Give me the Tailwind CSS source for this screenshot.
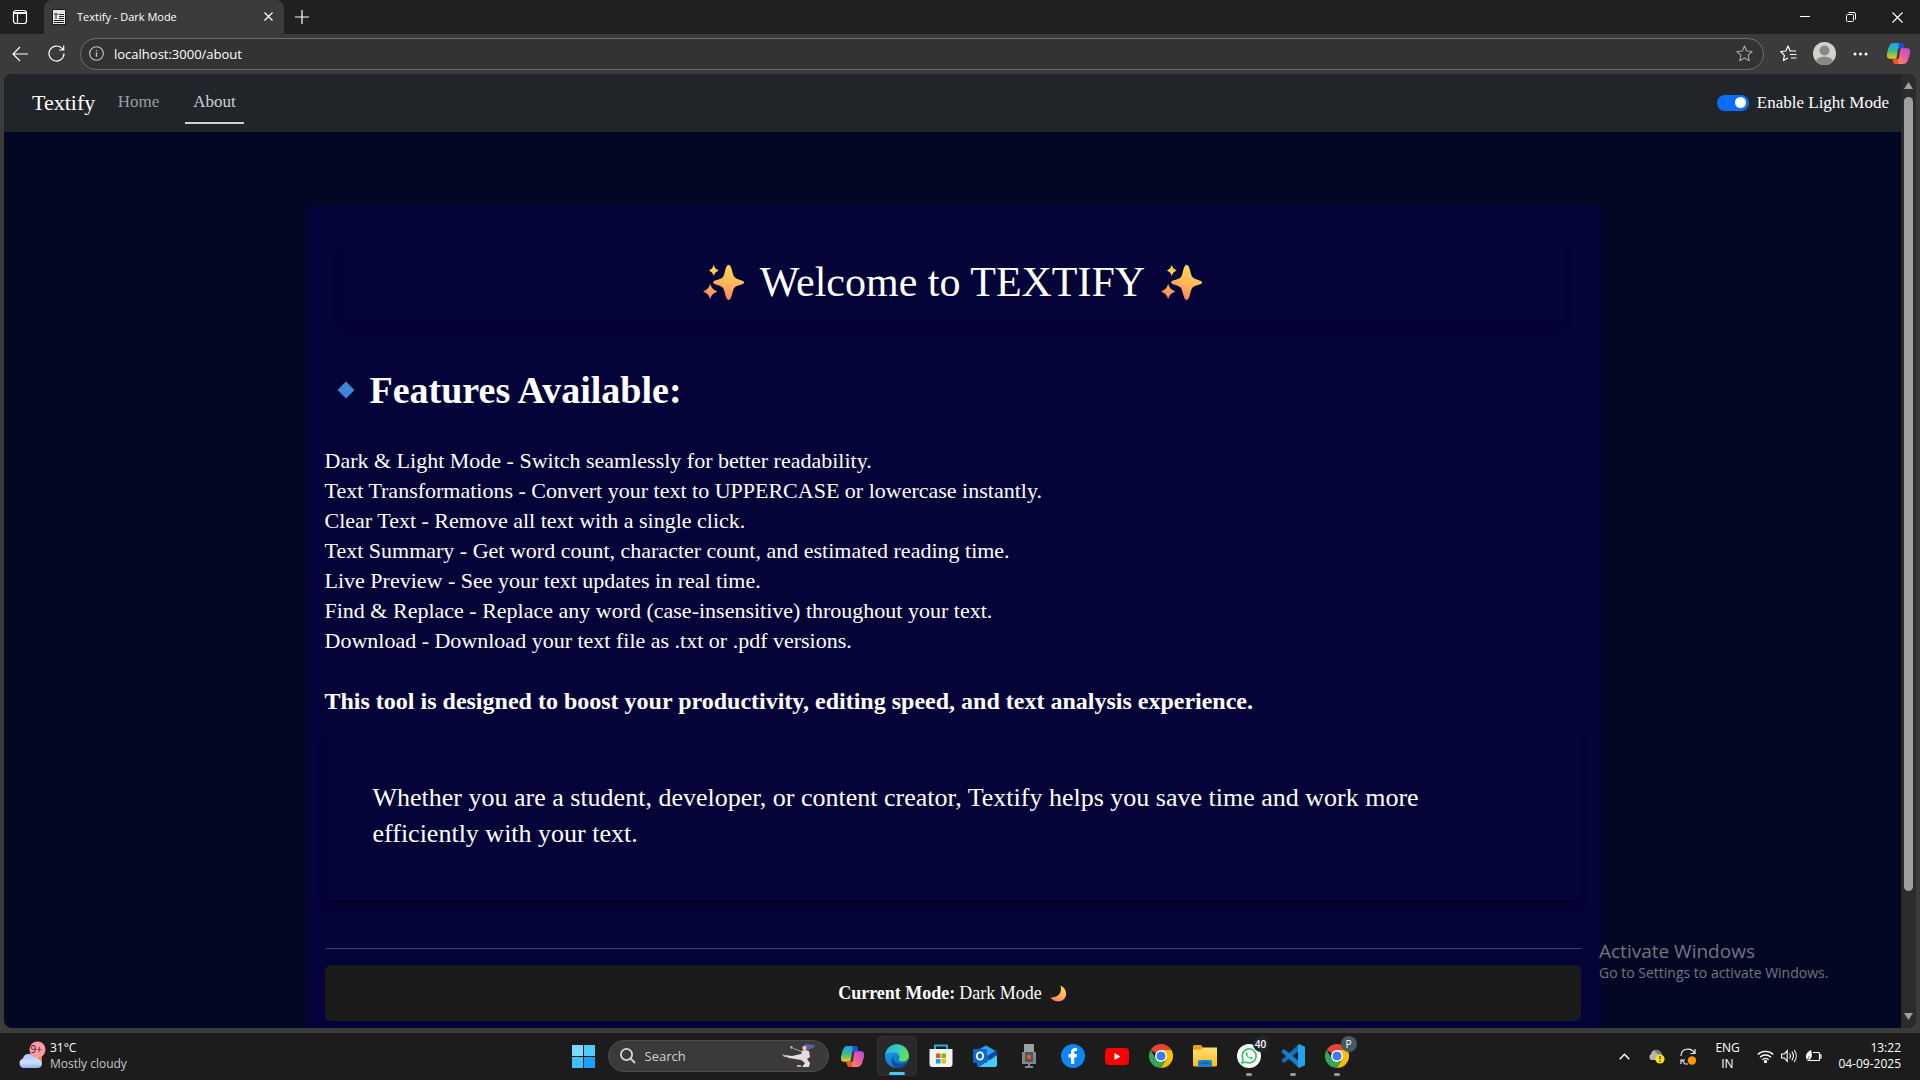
<!DOCTYPE html>
<html lang="en">
<head>
<meta charset="utf-8">
<title>Textify - Dark Mode</title>
<script src="https://cdn.jsdelivr.net/npm/@tailwindcss/browser@4"></script>
</head>
<body class="flex h-screen flex-col overflow-hidden bg-[#3b3b3b] font-['Open_Sans','Noto_Sans',sans-serif] text-white">
<svg class="absolute h-0 w-0" aria-hidden="true">
  <defs>
    <linearGradient id="gold" x1="0.6" y1="0" x2="0.3" y2="1"><stop offset="0" stop-color="#ffd659"/><stop offset=".5" stop-color="#ffb957"/><stop offset="1" stop-color="#ff7d66"/></linearGradient>
    <linearGradient id="cpA" x1="0" y1="0" x2="0" y2="1"><stop offset="0" stop-color="#12a5f4"/><stop offset=".5" stop-color="#3cb98b"/><stop offset="1" stop-color="#f2c811"/></linearGradient>
    <linearGradient id="cpB" x1="1" y1="0" x2="0" y2="1"><stop offset="0" stop-color="#a94df0"/><stop offset=".5" stop-color="#f0599a"/><stop offset="1" stop-color="#ff9a4d"/></linearGradient>
    <linearGradient id="edgeA" x1="0" y1="0" x2="1" y2=".3"><stop offset="0" stop-color="#2ba9e8"/><stop offset=".5" stop-color="#35c7c4"/><stop offset="1" stop-color="#64e05a"/></linearGradient>
    <linearGradient id="edgeB" x1="0" y1="0" x2="1" y2="1"><stop offset="0" stop-color="#1aa4ee"/><stop offset="1" stop-color="#0a5fb8"/></linearGradient>
    <linearGradient id="win" x1="0" y1="0" x2="1" y2="1"><stop offset="0" stop-color="#8be3fd"/><stop offset="1" stop-color="#0a98f5"/></linearGradient>
    <linearGradient id="folder" x1="0" y1="0" x2="0" y2="1"><stop offset="0" stop-color="#ffe07a"/><stop offset="1" stop-color="#fbbc1c"/></linearGradient>
    <linearGradient id="cloud" x1="0" y1="0" x2="0" y2="1"><stop offset="0" stop-color="#a9c7f7"/><stop offset=".6" stop-color="#cfdff8"/><stop offset="1" stop-color="#8fb3f2"/></linearGradient>
    <symbol id="sparkles" viewBox="0 0 40 44" preserveAspectRatio="none">
      <path fill="url(#gold)" d="M25 1c2 0 3 5 4 10s2 6 6 8 5 2 5 3.500-1 2-5 3.500-5 3-6 8-2 10-4 10-3-5-4-10-2-6-6-8-5-2-5-3.500 1-2 5-3.500 5-3 6-8 2-10 4-10z"/>
      <path fill="url(#gold)" d="M10.500 1c1 4 1.500 5 5 7-3.500 2-4 3-5 7-1-4-1.500-5-5-7 3.500-2 4-3 5-7zM7 24c1.300 5 2.500 7 7 9.500-4.500 2.500-5.700 4.500-7 9.500-1.300-5-2.500-7-7-9.500 4.500-2.500 5.700-4.500 7-9.500z"/>
    </symbol>
    <symbol id="copilot" viewBox="0 0 22 20">
      <path fill="url(#cpA)" d="M6 0h8L9 15H3c-3 0-4-2-2.500-7C1.800 3 3 0 6 0z"/>
      <path fill="#1b4fd8" d="M11 0h3c1.500 0 2 1 3 5h-4c-2 0-2-1-2-5z"/>
      <path fill="url(#cpB)" d="M16 20H8l5-15h6c3 0 4 2 2.500 7C20.200 17 19 20 16 20z"/>
      <path fill="#f0532d" d="M11 20H8c-1.500 0-2-1-3-5h4c2 0 2 1 2 5z"/>
      <path fill="#3b3b3b" d="M10.600 5h2.400L11.400 15H9z"/>
    </symbol>
    <symbol id="chrome" viewBox="0 0 24 24">
      <path fill="#ea4335" d="M12 12 1.600 6A12 12 0 0 1 22.400 6z"/>
      <path fill="#fbbc05" d="M12 6h10.400A12 12 0 0 1 12 24l5-9z"/>
      <path fill="#34a853" d="M1.600 6 7 15l5 3h3.500L12 24A12 12 0 0 1 1.600 6z"/>
      <circle cx="12" cy="12" r="6" fill="#fff"/><circle cx="12" cy="12" r="4.600" fill="#3b7cf0"/>
    </symbol>
  </defs>
</svg>

<!-- tab strip -->
<header class="flex h-[34px] shrink-0 items-stretch bg-[#202020]">
  <button aria-label="Tab actions" class="flex w-11 items-center justify-center rounded-br-lg pr-1">
    <svg class="h-4 w-4" viewBox="0 0 16 16" fill="none" stroke="#fff" stroke-width="1.200"><rect x="1.500" y="1.500" width="13" height="13" rx="2.500"/><path d="M1.500 3.500h13M1.500 4.500h13M5.500 4v10" /></svg>
  </button>
  <div class="flex w-60 items-center rounded-t-lg bg-[#3b3b3b] pl-2 pr-2 pb-px">
    <svg class="h-4 w-[14px]" viewBox="0 0 14 16"><rect width="14" height="16" rx="1" fill="#1b1b22"/><rect x="1" y="1" width="12" height="14" fill="#e6e6ea"/><path d="M2 5h4M4 5v5M7 5.500h5M7 7.500h5M7 9.500h5M2 11.500h10M2 13.500h10" stroke="#222" stroke-width="1"/></svg>
    <span class="ml-[11px] flex-1 text-[11px] leading-4">Textify - Dark Mode</span>
    <button aria-label="Close tab" class="flex h-4 w-4 items-center justify-center"><svg width="9" height="9" viewBox="0 0 9 9" stroke="#fff" stroke-width="1.200"><path d="M.5.5l8 8M8.500.5l-8 8"/></svg></button>
  </div>
  <button aria-label="New tab" class="flex w-9 items-center justify-center pb-px"><svg width="14" height="14" viewBox="0 0 14 14" stroke="#fff" stroke-width="1.200"><path d="M7 0v14M0 7h14"/></svg></button>
  <div class="flex-1"></div>
  <div class="flex">
    <button aria-label="Minimize" class="flex w-[46px] items-center justify-center"><svg width="10" height="10" viewBox="0 0 10 10" stroke="#fff"><path d="M0 4.500h10"/></svg></button>
    <button aria-label="Restore" class="flex w-[46px] items-center justify-center"><svg width="10" height="10" viewBox="0 0 10 10" fill="none" stroke="#fff"><rect x=".5" y="2.500" width="7" height="7" rx="1"/><path d="M2.500.5H8a1.500 1.500 0 0 1 1.500 1.500v5.500"/></svg></button>
    <button aria-label="Close" class="flex w-[46px] items-center justify-center"><svg width="11" height="11" viewBox="0 0 11 11" stroke="#fff" stroke-width="1.200"><path d="M.5.5l10 10M10.500.5l-10 10"/></svg></button>
  </div>
</header>

<!-- address bar row -->
<div class="flex h-10 shrink-0 items-center pb-px pl-3 pr-[10px]">
  <button aria-label="Back" class="w-9"><svg width="17" height="16" viewBox="0 0 17 16" fill="none" stroke="#fff" stroke-width="1.200"><path d="M16 8H1M8 1L1 8l7 7"/></svg></button>
  <button aria-label="Refresh" class="w-8"><svg width="17" height="17" viewBox="0 0 17 17" fill="none" stroke="#fff" stroke-width="1.200"><path d="M16 8.500A7.500 7.500 0 1 1 13.800 3.200L15.500 5M15.700.5V5h-4.500"/></svg></button>
  <div class="flex h-8 flex-1 items-center rounded-full border border-[#6e6e6e] bg-[#333] pl-2 pr-[10px]">
    <svg width="15" height="15" viewBox="0 0 15 15" fill="none" stroke="#c8c8c8" stroke-width="1.100"><circle cx="7.500" cy="7.500" r="6.800"/><path d="M7.500 6.500v4.300M7.500 4v1.300" stroke-width="1.300"/></svg>
    <input aria-label="Address" type="text" value="localhost:3000/about" class="ml-[10px] min-w-0 flex-1 bg-transparent text-[13px] leading-5 text-white outline-none">
    <button aria-label="Add to favorites"><svg width="17" height="17" viewBox="0 0 17 17" fill="none" stroke="#a8a8a8" stroke-width="1.100" stroke-linejoin="round"><path d="M8.500 1l2.200 5 5.500.5-4.100 3.700 1.200 5.500-4.800-2.800-4.800 2.800 1.200-5.500L.8 6.500 6.300 6z"/></svg></button>
  </div>
  <div class="ml-4 flex items-center">
    <button aria-label="Favorites" class="w-[33px]"><svg width="17" height="17" viewBox="0 0 17 17" fill="none" stroke="#fff" stroke-width="1.200" stroke-linejoin="round"><path d="M8 13l-4.600 2.500 1-5.200L.8 6.500l5-.5L8 1l2.200 5H16M10 9.500h6.500M11 13h5.500"/></svg></button>
    <button aria-label="Profile" class="w-10"><svg width="23" height="23" viewBox="0 0 23 23"><clipPath id="av"><circle cx="11.500" cy="11.500" r="11.500"/></clipPath><g clip-path="url(#av)"><rect width="23" height="23" fill="#d4d2cf"/><circle cx="11.500" cy="8.500" r="5" fill="#8c8985"/><ellipse cx="11.500" cy="20" rx="8.500" ry="5.500" fill="#8c8985"/></g></svg></button>
    <button aria-label="Settings and more" class="w-[34px]"><svg width="15" height="4" viewBox="0 0 15 4" fill="#fff"><circle cx="2" cy="2" r="1.500"/><circle cx="7.500" cy="2" r="1.500"/><circle cx="13" cy="2" r="1.500"/></svg></button>
    <button aria-label="Copilot" class="w-[23px]"><svg width="23" height="21"><use href="#copilot"/></svg></button>
  </div>
</div>

<!-- web page viewport -->
<div class="mx-1 mb-[5px] flex min-h-0 flex-1 overflow-hidden rounded-lg bg-[#020824]">
  <div class="min-w-0 flex-1 overflow-hidden font-['Liberation_Serif',serif]">
    <nav class="flex h-[58px] items-center bg-[#212529] pl-7 pr-3">
      <a href="#" class="w-[77px] text-[22px] leading-8">Textify</a>
      <a href="#" class="flex h-[42px] w-[59px] items-center justify-center border-b-2 border-transparent text-[17px] text-[#9b9d9f]">Home</a>
      <a href="#" class="ml-[17px] flex h-[42px] w-[59px] items-center justify-center border-b-2 border-[#cfd0d1] text-[17px] text-[#cfd0d1]">About</a>
      <div class="flex-1"></div>
      <label class="flex items-center gap-2 pb-px text-[17px] leading-6">
        <input type="checkbox" role="switch" checked class="peer sr-only">
        <span class="flex h-4 w-8 items-center justify-end rounded-full bg-[#0d6efd] pr-[3px]"><span class="h-[11px] w-[11px] rounded-full bg-white"></span></span>
        Enable Light Mode
      </label>
    </nav>

    <main class="mx-auto mt-[74px] w-full max-w-[1296px] bg-[#050439] px-5 pt-5 pb-10">
      <div class="m-4 flex h-20 items-center justify-center gap-4 rounded shadow-[0_6px_8px_-2px_rgba(0,0,0,0.25)]">
        <svg class="h-9 w-[41px]"><use href="#sparkles"/></svg>
        <h1 class="text-[42px] leading-[48px]">Welcome to TEXTIFY</h1>
        <svg class="h-9 w-[41px]"><use href="#sparkles"/></svg>
      </div>
      <h2 class="mt-12 flex h-10 items-center gap-[15px] pl-3 text-[38px] leading-[38px] font-bold">
        <svg width="18" height="18" viewBox="0 0 18 18"><path d="M9 .5L17.500 9 9 17.500.5 9z" fill="#3f86db"/></svg>
        Features Available:
      </h2>
      <ul class="mt-9 text-[22px] leading-[30px]">
        <li>Dark &amp; Light Mode - Switch seamlessly for better readability.</li>
        <li>Text Transformations - Convert your text to UPPERCASE or lowercase instantly.</li>
        <li>Clear Text - Remove all text with a single click.</li>
        <li>Text Summary - Get word count, character count, and estimated reading time.</li>
        <li>Live Preview - See your text updates in real time.</li>
        <li>Find &amp; Replace - Replace any word (case-insensitive) throughout your text.</li>
        <li>Download - Download your text file as .txt or .pdf versions.</li>
      </ul>
      <p class="mt-[30px] text-[24px] leading-[30px] font-bold">This tool is designed to boost your productivity, editing speed, and text analysis experience.</p>
      <p class="mt-4 rounded p-12 text-[26px] leading-9 shadow-[0_6px_8px_-2px_rgba(0,0,0,0.25)]">Whether you are a student, developer, or content creator, Textify helps you save time and work more<br>efficiently with your text.</p>
      <hr class="mt-12 mb-4 border-[#433f66]">
      <div class="flex h-14 items-center justify-center gap-1 rounded-md bg-[#1b1b1c] text-[18px] leading-6">
        <strong>Current Mode:</strong> <span>Dark Mode</span>
        <svg class="ml-1" width="17" height="17" viewBox="0 0 17 17"><path d="M10.500.5c8 3.500 7.500 14.500-1.500 15.800C5.500 16.800 2 15 .5 12.500 8.500 13 12.500 7 10.500.5z" fill="url(#gold)"/></svg>
      </div>
    </main>
  </div>
  <div class="flex w-[15px] flex-col items-center bg-[#2c2c2c] py-2">
    <svg width="9" height="7" viewBox="0 0 9 7" fill="#9f9f9f"><path d="M4.500 0L9 7H0z"/></svg>
    <div class="mt-2 h-[794px] w-[9px] rounded-full bg-[#9f9f9f]"></div>
    <div class="flex-1"></div>
    <svg width="9" height="7" viewBox="0 0 9 7" fill="#9f9f9f"><path d="M4.500 7L9 0H0z"/></svg>
  </div>
</div>

<!-- activation watermark over the desktop -->
<div class="pointer-events-none absolute right-[84px] bottom-[97px] w-[237px] text-[#73757f]">
  <p class="text-[19px] leading-6">Activate Windows</p>
  <p class="text-[14px] leading-5 whitespace-nowrap">Go to Settings to activate Windows.</p>
</div>

<!-- taskbar -->
<footer class="grid h-[47px] shrink-0 grid-cols-[1fr_auto_1fr] items-center bg-[#1c1c1c] pb-px">
  <div class="flex items-center pl-[18px]">
    <svg width="28" height="30" viewBox="0 0 28 30"><path d="M18 15h6v5h-6z" fill="#f7821b"/><path d="M5 27a5 5 0 0 1 0-9.500 6 6 0 0 1 10-3c3-.5 5 1 5.500 3.500A4.600 4.600 0 0 1 20 27z" fill="url(#cloud)"/><circle cx="19.500" cy="8.500" r="8" fill="#ff99a4"/><text x="12.500" y="12" font-size="10" fill="#1c1c1c" font-family="Open Sans">9+</text></svg>
    <div class="ml-1 text-[12px] leading-4"><p>31°C</p><p class="text-[#c6c6c6]">Mostly cloudy</p></div>
  </div>
  <div class="flex items-center gap-1">
    <button aria-label="Start" class="flex h-10 w-10 items-center justify-center"><svg width="23" height="23" viewBox="0 0 23 23"><g fill="#3dbdf8"><path d="M0 0h11v11H0z" fill="#7ad9fc"/><path d="M12 0h11v11H12z" fill="#52cbfb"/><path d="M0 12h11v11H0z" fill="#3fc0fb"/><path d="M12 12h11v11H12z" fill="#17a2f8"/></g></svg></button>
    <div class="flex h-8 w-[221px] items-center rounded-full border border-[#4d4d4d] bg-[#3a3a3a] pr-3 pl-[11px]">
      <svg width="16" height="16" viewBox="0 0 16 16" fill="none" stroke="#d8d8d8" stroke-width="1.800"><circle cx="6.500" cy="6.500" r="5.600"/><path d="M10.700 10.700l4.300 4.300"/></svg>
      <input aria-label="Search" placeholder="Search" class="ml-[9px] w-24 min-w-0 flex-1 bg-transparent text-[13px] leading-5 outline-none placeholder:text-[#cfcfcf]">
      <svg width="34" height="24" viewBox="0 0 34 24"><path d="M22 1c3-2 6 0 11 0-1 4-4 3-7 5l-4-1z" fill="#5d5ba8"/><path d="M9 3l2 1 8 3 4-1 4 1 1 6-3 2 3 4-1 4h-7l3-4-4-3-12-2-5-2 1-1 7 1 9-2 1-2-8-3z" fill="#e6dcdc"/><path d="M8 2l2 0 1 2-2 1zM0 10l3 1 3 2-4 0zM15 21l4 0 0 2-4 0z" fill="#e0a58d"/><circle cx="22.500" cy="4" r="2.200" fill="#edc1ac"/></svg>
    </div>
    <button aria-label="Copilot" class="flex h-10 w-10 items-center justify-center"><svg width="23" height="21"><use href="#copilot"/></svg></button>
    <button aria-label="Edge" class="relative flex h-10 w-10 items-center justify-center rounded border border-[#303030] bg-[#292929]">
      <svg width="24" height="24" viewBox="0 0 24 24"><circle cx="12" cy="12" r="12" fill="url(#edgeB)"/><path d="M.3 10A12 12 0 0 1 24 11.500c0 4-3 6-6.500 6-3 0-4.500-1.500-3.500-3 1.500-2.500-.5-6-5-6C5 8.500 1.500 10 .3 10z" fill="url(#edgeA)"/><path d="M8 13c0 5 5 9 14 5.500A12 12 0 0 1 12 24C6 22 5 14 9.500 11.500 8.500 12 8 12.500 8 13z" fill="#0c4f9c"/></svg>
      <span class="absolute bottom-0 h-[3px] w-4 rounded-full bg-[#4cc2ff]"></span>
    </button>
    <button aria-label="Store" class="flex h-10 w-10 items-center justify-center"><svg width="24" height="24" viewBox="0 0 24 24"><path d="M6 6V1.500h12V6" fill="none" stroke="#2ba8ea" stroke-width="2"/><path d="M.5 5h23v15a3 3 0 0 1-3 3h-17a3 3 0 0 1-3-3z" fill="#f3f3f3"/><path d="M7 9.500h4.500V14H7z" fill="#f25022"/><path d="M12.500 9.500H17V14h-4.500z" fill="#7fba00"/><path d="M7 15h4.500v4.500H7z" fill="#00a4ef"/><path d="M12.500 15H17v4.500h-4.500z" fill="#ffb900"/></svg></button>
    <button aria-label="Outlook" class="flex h-10 w-10 items-center justify-center"><svg width="24" height="24" viewBox="0 0 24 24"><path d="M4 6l9-5 10 6v14a2 2 0 0 1-2 2H6a2 2 0 0 1-2-2z" fill="#1172c9"/><path d="M8 5l5-3 9 5-8 6H8z" fill="#35a3ec"/><path d="M24 9v12a2 2 0 0 1-2 2H6l18-12z" fill="#45cdf5"/><path d="M14 12l10-6v5l-7 5z" fill="#0c4aa0"/><rect y="5" width="14" height="14" rx="1" fill="#1066c5"/><ellipse cx="7" cy="12" rx="3.200" ry="3.700" fill="none" stroke="#fff" stroke-width="1.800"/></svg></button>
    <button aria-label="Voice recorder" class="flex h-10 w-10 items-center justify-center"><svg width="16" height="24" viewBox="0 0 16 24"><path d="M3 0h10v19H3z" fill="#9aa1a6"/><path d="M1 8h14v12H1z" fill="#81898f"/><path d="M4 8h8v10H4z" fill="#50575c"/><circle cx="8" cy="13" r="2.200" fill="#ee5a24"/><path d="M7 20h2v2h3v2H4v-2h3z" fill="#81898f"/></svg></button>
    <button aria-label="Facebook" class="flex h-10 w-10 items-center justify-center"><svg width="24" height="24" viewBox="0 0 24 24"><circle cx="12" cy="12" r="12" fill="#0c86f2"/><path d="M10 20v-6.500H7.500V10H10V8.500C10 5.500 11.500 4 14.300 4H16v3h-1.200c-1.300 0-1.600.6-1.600 1.700V10H16l-.5 3.500h-2.300V20z" fill="#fff"/></svg></button>
    <button aria-label="YouTube" class="flex h-10 w-10 items-center justify-center"><svg width="24" height="17" viewBox="0 0 24 17"><rect width="24" height="17" rx="4" fill="#f00"/><path d="M9.500 5v7l6-3.500z" fill="#fff"/></svg></button>
    <button aria-label="Chrome" class="flex h-10 w-10 items-center justify-center"><svg width="24" height="24"><use href="#chrome"/></svg></button>
    <button aria-label="File Explorer" class="flex h-10 w-10 items-center justify-center"><svg width="24" height="22" viewBox="0 0 24 22"><path d="M0 1.500A1.500 1.500 0 0 1 1.500 0H8l2 2.500V8H0z" fill="#e8a010"/><path d="M0 5l8-.5 2-2h14V20a1.500 1.500 0 0 1-1.500 1.500h-21A1.500 1.500 0 0 1 0 20z" fill="url(#folder)"/><path d="M5 21.500V17a2 2 0 0 1 2-2h10a2 2 0 0 1 2 2v4.500z" fill="#1583d4"/><path d="M8 18h8" stroke="#0a5ba3" stroke-width="1.200"/></svg></button>
    <button aria-label="WhatsApp" class="relative flex h-10 w-10 items-center justify-center"><svg width="24" height="24" viewBox="0 0 24 24"><circle cx="12" cy="12" r="12" fill="#fff"/><path d="M5 19l1-3.700A7 7 0 1 1 8.700 18z" fill="none" stroke="#25c15e" stroke-width="1.500"/><path d="M9.500 8c-1.500 1.500-.5 4 1.500 5.500s4 2 5 .5l-2-1.300-1 1c-1.500-.6-2.300-1.500-2.700-2.600l.7-.9z" fill="#25c15e"/></svg>
      <span class="absolute top-0 right-0 flex h-4 w-4 items-center justify-center rounded-full bg-[#24262e] text-[10px] leading-none font-semibold">40</span><span class="absolute bottom-0 h-[3px] w-[6px] rounded-full bg-[#9a9a9a]"></span></button>
    <button aria-label="Visual Studio Code" class="relative flex h-10 w-10 items-center justify-center"><svg width="24" height="24" viewBox="0 0 24 24"><path d="M18 0v7L3 19 0 16.500z" fill="#0f6fb5"/><path d="M18 24v-7L3 5 0 7.500z" fill="#1180cb"/><path d="M18 0l6 2.700v18.600L18 24l-1-1V1z" fill="#27a1ee"/></svg><span class="absolute bottom-0 h-[3px] w-[6px] rounded-full bg-[#9a9a9a]"></span></button>
    <button aria-label="Chrome profile P" class="relative flex h-10 w-10 items-center justify-center"><svg width="24" height="24"><use href="#chrome"/></svg>
      <span class="absolute top-0 right-0 flex h-4 w-4 items-center justify-center rounded-full bg-[#455a64] text-[10px] leading-none">P</span><span class="absolute bottom-0 h-[3px] w-[6px] rounded-full bg-[#9a9a9a]"></span></button>
  </div>
  <div class="flex items-center justify-end pr-[19px] text-[12px] leading-4">
    <svg width="11" height="7" viewBox="0 0 11 7" fill="none" stroke="#fff" stroke-width="1.500"><path d="M.7 6.300l4.800-5 4.800 5"/></svg>
    <svg class="ml-[18px]" width="17" height="15" viewBox="0 0 17 15"><path d="M3 11a3.500 3.500 0 0 1 0-6A5 5 0 0 1 12 3c2 1 2 3 2 8z" fill="#b4b4b4"/><path d="M6 2a5 5 0 0 1 8 4l-4-1z" fill="#7a7a7a"/><circle cx="12" cy="10" r="4.600" fill="#ffe100"/><path d="M12 7v3.500M12 11.700v1.300" stroke="#222" stroke-width="1.200"/></svg>
    <svg class="ml-[15px]" width="17" height="17" viewBox="0 0 17 17" fill="none" stroke="#eee" stroke-width="1.200"><path d="M1 8C1 0 11-1 14.500 5M15 1v4.500h-4.500M1 16v-4h4M2 12l3 4h3"/><circle cx="12" cy="12.500" r="4.200" fill="#ff9800" stroke="none"/></svg>
    <div class="ml-[18px] w-6 text-center"><p>ENG</p><p>IN</p></div>
    <svg class="ml-[18px]" width="17" height="13" viewBox="0 0 17 13" fill="none" stroke="#fff" stroke-width="1.300"><path d="M.8 4.500a11 11 0 0 1 15.400 0M3 7.200a8 8 0 0 1 11 0M5.300 9.700a4.500 4.500 0 0 1 6.400 0"/><circle cx="8.500" cy="11.500" r="1" fill="#fff"/></svg>
    <svg class="ml-[7px]" width="17" height="14" viewBox="0 0 17 14" fill="none" stroke="#fff" stroke-width="1.100"><path d="M.6 5h2.600l3-3.400v10.800l-3-3.400H.6zM8.500 4.500a4 4 0 0 1 0 5M10.800 2.700a7 7 0 0 1 0 8.600M13.200 1a10 10 0 0 1 0 12"/></svg>
    <svg class="ml-[7px]" width="17" height="13" viewBox="0 0 17 13" fill="none" stroke="#fff" stroke-width="1.200"><path d="M8 2.500h5.500a1 1 0 0 1 1 1v6a1 1 0 0 1-1 1H2M14.500 5H16v3h-1.500"/><path d="M6 0C2 2 0 5 1.500 9.500H5C7.500 7 7 3 6 0z" fill="#fff" stroke="none"/><path d="M1 12L4.500 6" stroke="#1c1c1c" stroke-width=".7"/></svg>
    <div class="ml-4 text-right"><p>13:22</p><p>04-09-2025</p></div>
  </div>
</footer>
</body>
</html>
